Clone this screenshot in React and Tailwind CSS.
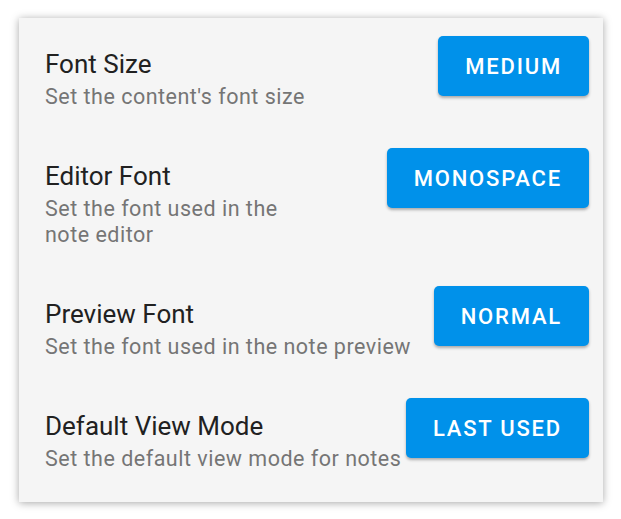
import React from "react";

const rows = [
  { title: "Font Size", sub: "Set the content's font size", btn: "MEDIUM" },
  { title: "Editor Font", sub: "Set the font used in the note editor", btn: "MONOSPACE", narrow: true },
  { title: "Preview Font", sub: "Set the font used in the note preview", btn: "NORMAL" },
  { title: "Default View Mode", sub: "Set the default view mode for notes", btn: "LAST USED" },
];

export default function App() {
  return (
    <div className="w-[621px] h-[519px] bg-white pt-[18px] pl-[19px] pr-[18px]" style={{ fontFamily: "Roboto, 'Liberation Sans', sans-serif" }}>
      <div className="h-[484px] bg-[#f5f5f5] shadow-[0_1px_8px_rgba(0,0,0,0.35)] pt-[18px] pl-[26px] pr-[14px] flex flex-col gap-[38px]">
        {rows.map((r) => (
          <div key={r.title} className="flex items-start justify-between">
            <div className={`pt-[12px] ${r.narrow ? "max-w-[262px]" : ""}`}>
              <div className="text-[26px] leading-[32px] text-[#212121]">{r.title}</div>
              <div className="mt-[4px] text-[21.5px] leading-[26px] tracking-[0.5px] text-[#757575]">{r.sub}</div>
            </div>
            <button className="shrink-0 h-[60px] px-[27px] rounded-[5px] bg-[#0091ea] text-white text-[22px] font-medium tracking-[1.8px] shadow-[0_2px_3px_rgba(0,0,0,0.3)]">
              {r.btn}
            </button>
          </div>
        ))}
      </div>
    </div>
  );
}
